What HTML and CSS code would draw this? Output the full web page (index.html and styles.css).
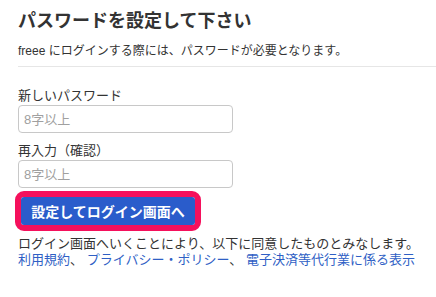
FILE: index.html
```html
<!DOCTYPE html>
<html lang="ja">
<head>
<meta charset="utf-8">
<title>パスワードを設定して下さい</title>
<link rel="stylesheet" href="styles.css">
</head>
<body>
<div class="page">
  <div class="header">
    <h1 class="title">パスワードを設定して下さい</h1>
    <p class="lead">freee にログインする際には、パスワードが必要となります。</p>
  </div>
  <form class="form">
    <div class="field">
      <label class="label" for="pw1">新しいパスワード</label>
      <input class="input" id="pw1" type="password" placeholder="8字以上">
    </div>
    <div class="field">
      <label class="label" for="pw2">再入力（確認）</label>
      <input class="input" id="pw2" type="password" placeholder="8字以上">
    </div>
    <div class="focus-ring">
      <button class="submit" type="button">設定してログイン画面へ</button>
    </div>
    <p class="note">ログイン画面へいくことにより、以下に同意したものとみなします。</p>
    <p class="links"><a href="#">利用規約</a>、 <a href="#">プライバシー・ポリシー</a>、 <a href="#">電子決済等代行業に係る表示</a></p>
  </form>
</div>
</body>
</html>
```

FILE: styles.css
```css
* { box-sizing: border-box; }
html, body { margin: 0; padding: 0; background: #fff; }
body {
  font-family: "Liberation Sans", "Noto Sans CJK JP", sans-serif;
  color: #333;
}
.page {
  padding-left: 18px;
}
.header {
  border-bottom: 1px solid #e6e6e6;
  padding-top: 9px;
  padding-bottom: 6px;
}
.title {
  margin: 0;
  font-size: 18px;
  line-height: 24px;
  font-weight: bold;
  color: #333;
}
.lead {
  margin: 10px 0 0;
  font-size: 12px;
  line-height: 17px;
}
.form {
  padding-top: 20px;
}
.field {
  display: flex;
  flex-direction: column;
  margin-bottom: 9px;
}
.label {
  font-size: 13px;
  line-height: 18px;
  margin-bottom: 0;
}
.input {
  width: 215px;
  height: 28px;
  border: 1px solid #c8c8c8;
  border-radius: 4px;
  padding: 0 5px;
  font-family: inherit;
  font-size: 13px;
  color: #333;
  outline: none;
}
.input::placeholder { color: #a0a0a0; }
.focus-ring {
  display: inline-block;
  margin-left: -3px;
  margin-top: -6px;
  border: 6px solid #f5105c;
  border-radius: 9px;
}
.submit {
  display: block;
  width: 174px;
  height: 28px;
  border: none;
  border-radius: 3px;
  background: #2a5ccb;
  color: #fff;
  font-family: inherit;
  font-size: 14px;
  font-weight: bold;
  padding: 0;
  cursor: pointer;
}
.note {
  margin: 4px 0 0;
  font-size: 13px;
  line-height: 17px;
}
.links {
  margin: 0;
  font-size: 13px;
  line-height: 16px;
}
.links a {
  color: #2f5fc5;
  text-decoration: none;
}
```
